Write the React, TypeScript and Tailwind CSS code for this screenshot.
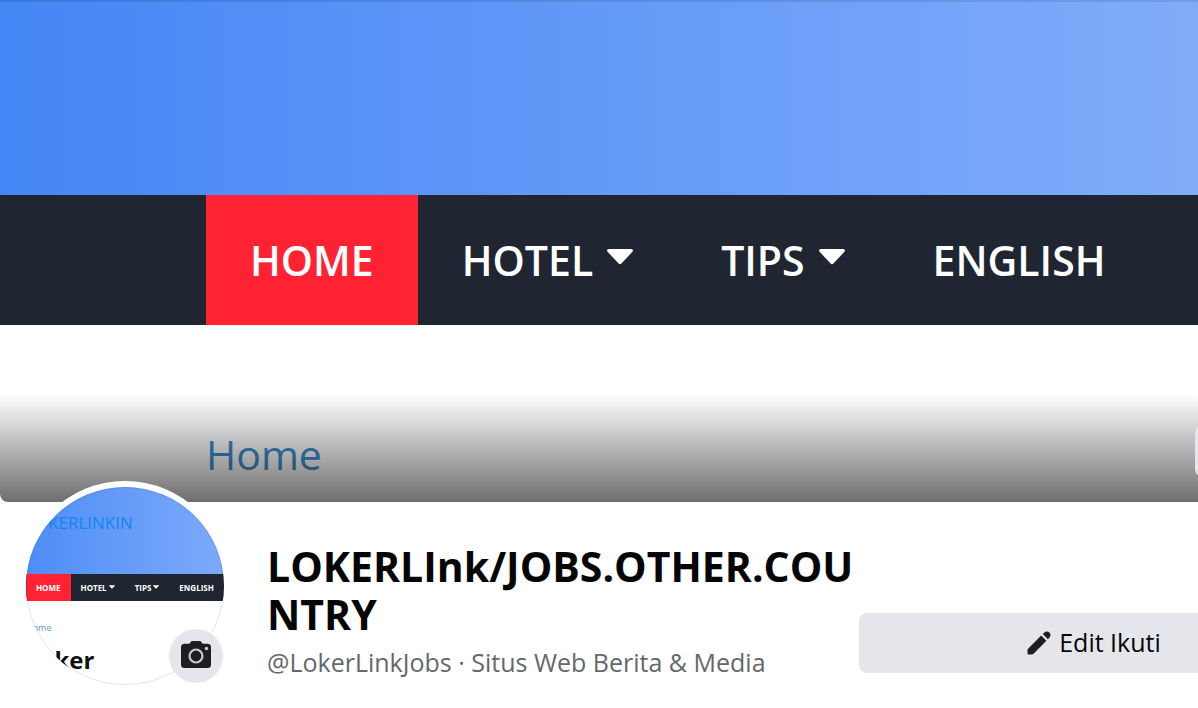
const coverLinks = [
  { label: "HOME", active: true, caret: false },
  { label: "HOTEL", active: false, caret: true },
  { label: "TIPS", active: false, caret: true },
  { label: "ENGLISH", active: false, caret: false },
];

function Caret({ className }: { className: string }) {
  return (
    <svg viewBox="0 0 26 16" className={className} aria-hidden="true">
      <path
        d="M2 0h22c1.8 0 2.6 1.6 1.4 2.8L14.4 14.6c-.8.8-2 .8-2.8 0L.6 2.8C-.6 1.6.2 0 2 0Z"
        fill="currentColor"
      />
    </svg>
  );
}

function CameraIcon() {
  return (
    <svg viewBox="0 0 30 27" className="h-[27px] w-[30px]" aria-hidden="true">
      <path
        d="M9.5 1.2C10 .4 10.7 0 11.6 0h6.8c.9 0 1.6.4 2.1 1.2l.7 1c.3.4.8.6 1.3.6h4A3.5 3.5 0 0 1 30 6.300v17.200a3.500 3.500 0 0 1-3.500 3.500h-23A3.500 3.500 0 0 1 0 23.500V6.300a3.500 3.500 0 0 1 3.500-3.500h4c.5 0 1-.2 1.300-.6Z"
        fill="#1c1e21"
      />
      <circle cx="15" cy="15" r="6.500" fill="none" stroke="#c9cbd0" strokeWidth="2.200" />
      <circle cx="25.500" cy="7.500" r="1.700" fill="#c9cbd0" />
    </svg>
  );
}

function PencilIcon() {
  return (
    <svg viewBox="0 0 24 24" className="size-6" aria-hidden="true">
      <path
        d="M14.200 4.600 1.300 17.400c-.5.500-.8 1.100-.8 1.800v3.400c0 .5.400.9.900.9h3.400c.7 0 1.300-.3 1.800-.8L19.400 9.800Z"
        fill="#1c1e21"
      />
      <path
        d="m15.800 3 1.600-1.600c1.400-1.400 3.600-1.300 5 .1s1.500 3.600.1 5l-1.600 1.700Z"
        fill="#1c1e21"
      />
    </svg>
  );
}

function Cover() {
  return (
    <div className="relative overflow-hidden rounded-bl-lg bg-white font-['Open_Sans',sans-serif]">
      <div className="h-[195px] border-t-2 border-black/10 bg-linear-to-r from-[#4486f5] to-[#81acfa] bg-origin-border" />
      <nav className="flex h-[130px] bg-[#202532] pl-[206px] text-[41px] leading-[130px] font-semibold text-white">
        {coverLinks.map((link) => (
          <a
            key={link.label}
            href="#"
            className={
              link.active
                ? "flex shrink-0 items-center bg-[#ff2233] px-11"
                : "flex shrink-0 items-center gap-[14px] px-11"
            }
          >
            {link.label}
            {link.caret && <Caret className="mb-[6px] h-4 w-[26px]" />}
          </a>
        ))}
      </nav>
      <div className="h-[177px] pt-[99px] pl-[206px] text-[41px] leading-[60px] text-[#3b8fd4]">
        <a href="#">Home</a>
      </div>
      <div className="absolute inset-x-0 bottom-0 h-[108px] bg-linear-to-b from-black/0 to-black/57" />
      <button
        type="button"
        aria-label="Edit"
        className="absolute -right-14 bottom-[25px] h-[52px] w-[59px] rounded-lg bg-[#e4e6eb]"
      />
    </div>
  );
}

function Avatar() {
  return (
    <div className="relative -mt-[21px] size-[210px] shrink-0 rounded-full bg-white p-[6px] font-['Open_Sans',sans-serif]">
      <div className="h-full overflow-hidden rounded-full bg-white">
        <div className="h-[87px] bg-linear-to-r from-[#4d8df6] to-[#7caafa] pt-6 text-[17px] leading-6 text-[#1684f0]">
          LOKERLINKIN
        </div>
        <div className="flex h-[27px] bg-[#202532] text-[8px] font-bold text-white">
          {coverLinks.map((link) => (
            <span
              key={link.label}
              className={
                link.active
                  ? "flex shrink-0 items-center bg-[#ff2233] px-[10px]"
                  : "flex shrink-0 items-center gap-[2px] px-[10px]"
              }
            >
              {link.label}
              {link.caret && <Caret className="mb-[2px] h-1 w-[6px]" />}
            </span>
          ))}
        </div>
        <div className="pt-[21px] text-[9px] leading-3 text-[#5b9bc4]">Home</div>
        <div className="pt-2 text-2xl leading-9 font-bold text-[#111]">Loker</div>
      </div>
      <div className="pointer-events-none absolute inset-[6px] rounded-full border border-black/10" />
      <button
        type="button"
        aria-label="Camera"
        className="absolute right-[7px] bottom-2 flex size-[54px] items-center justify-center rounded-full bg-[#e4e6eb] pb-1"
      >
        <CameraIcon />
      </button>
    </div>
  );
}

export default function App() {
  return (
    <div className="min-h-screen overflow-hidden bg-white font-['Open_Sans',sans-serif]">
      <Cover />
      <div className="flex items-start pl-5">
        <Avatar />
        <div className="ml-[37px] w-[592px] shrink-0 pt-10">
          <h1 className="text-[41px] leading-[48px] font-bold break-all text-[#050505]">
            LOKERLInk/JOBS.OTHER.COUNTRY
          </h1>
          <p className="mt-1 text-[25px] leading-10 text-[#65676b]">
            @LokerLinkJobs · Situs Web Berita &amp; Media
          </p>
        </div>
        <button
          type="button"
          className="mt-[111px] flex h-[60px] w-[470px] shrink-0 items-center justify-center gap-2 rounded-lg bg-[#e4e6eb] text-[25px] font-medium text-[#050505]"
        >
          <PencilIcon />
          Edit Ikuti
        </button>
      </div>
    </div>
  );
}
